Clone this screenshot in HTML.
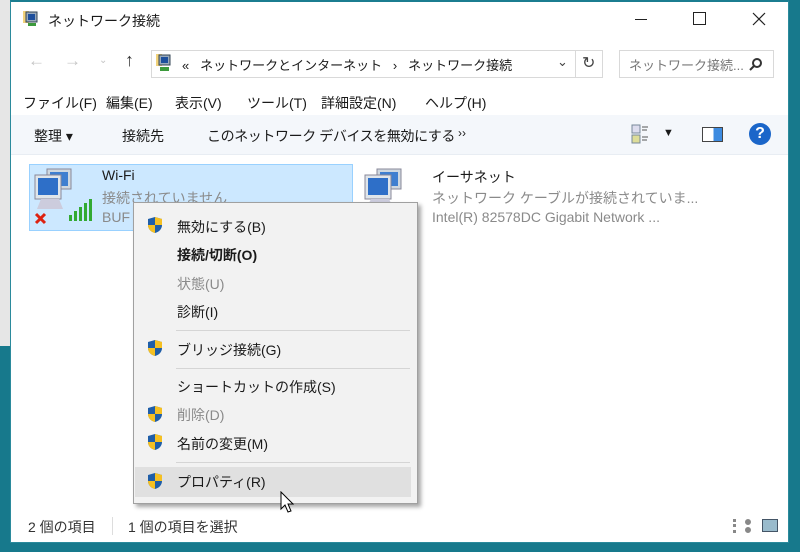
<!DOCTYPE html>
<html><head><meta charset="utf-8"><style>
*{margin:0;padding:0;box-sizing:border-box}
body{width:800px;height:552px;position:relative;overflow:hidden;background:#17798c;font-family:"Liberation Sans","Noto Sans CJK JP",sans-serif;font-size:14px;color:#1a1a1a}
.a{position:absolute;white-space:nowrap}
.g{color:#8a8a8a}
.sh{position:absolute;width:16px;height:18px}
</style></head><body>
<div class="a" style="left:0;top:0;width:10px;height:346px;background:#e6e6e6"></div>
<div class="a" style="left:10px;top:0;width:779px;height:543px;background:#fff;border:1px solid #2b8a9c;border-top:2px solid #1b7d90"></div>
<!-- title -->
<svg class="a" style="left:22px;top:10px" width="18" height="18"><rect x="1" y="1" width="6" height="12" fill="#f1d27a"/><rect x="4" y="2" width="11" height="10" fill="#9ab" stroke="#345" stroke-width="1"/><rect x="6" y="4" width="7" height="6" fill="#1d4f9c"/><rect x="6" y="13" width="8" height="3" fill="#3c9a3c"/></svg>
<div class="a" style="left:48px;top:11px;font-size:14px">ネットワーク接続</div>
<div class="a" style="left:635px;top:19px;width:12px;height:1px;background:#222"></div>
<div class="a" style="left:693px;top:12px;width:13px;height:13px;border:1px solid #222"></div>
<svg class="a" style="left:752px;top:12px" width="14" height="14"><path d="M1 1L13 13M13 1L1 13" stroke="#222" stroke-width="1.2"/></svg>
<!-- nav -->
<div class="a" style="left:28px;top:51px;color:#c5c5c5;font-size:17px">←</div>
<div class="a" style="left:64px;top:51px;color:#c5c5c5;font-size:17px">→</div>
<div class="a" style="left:99px;top:55px;color:#c5c5c5;font-size:10px">⌄</div>
<div class="a" style="left:125px;top:50px;font-size:18px;color:#333">↑</div>
<div class="a" style="left:151px;top:50px;width:452px;height:28px;border:1px solid #d9d9d9"></div>
<div class="a" style="left:575px;top:50px;width:1px;height:28px;background:#d9d9d9"></div>
<svg class="a" style="left:155px;top:53px" width="18" height="20"><rect x="1" y="1" width="6" height="12" fill="#f1d27a"/><rect x="4" y="2" width="11" height="10" fill="#9ab" stroke="#345"/><rect x="6" y="4" width="7" height="6" fill="#1d4f9c"/><rect x="5" y="14" width="9" height="4" fill="#3c9a3c"/></svg>
<div class="a" style="left:182px;top:55px;font-size:13px">«&nbsp;&nbsp; ネットワークとインターネット&nbsp;&nbsp; ›&nbsp;&nbsp; ネットワーク接続</div>
<div class="a" style="left:557px;top:54px;font-size:13px;color:#444">⌄</div>
<div class="a" style="left:582px;top:53px;font-size:16px;color:#444">↻</div>
<div class="a" style="left:619px;top:50px;width:155px;height:28px;border:1px solid #d9d9d9"></div>
<div class="a g" style="left:629px;top:55px;font-size:13px;color:#777">ネットワーク接続...</div>
<svg class="a" style="left:749px;top:57px" width="14" height="14"><circle cx="8" cy="6" r="4" fill="none" stroke="#333" stroke-width="2"/><line x1="5" y1="9" x2="1" y2="13" stroke="#333" stroke-width="2"/></svg>
<!-- menu -->
<div class="a" style="left:23px;top:93px">ファイル(F)</div>
<div class="a" style="left:106px;top:93px">編集(E)</div>
<div class="a" style="left:175px;top:93px">表示(V)</div>
<div class="a" style="left:247px;top:93px">ツール(T)</div>
<div class="a" style="left:321px;top:93px">詳細設定(N)</div>
<div class="a" style="left:425px;top:93px">ヘルプ(H)</div>
<!-- toolbar -->
<div class="a" style="left:11px;top:115px;width:777px;height:40px;background:#f4f7fb;border-bottom:1px solid #e8edf3"></div>
<div class="a" style="left:34px;top:126px">整理 ▾</div>
<div class="a" style="left:122px;top:126px">接続先</div>
<div class="a" style="left:207px;top:126px;letter-spacing:-0.4px">このネットワーク デバイスを無効にする</div>
<div class="a" style="left:458px;top:126px;font-size:12px">››</div>
<svg class="a" style="left:631px;top:124px" width="22" height="22"><rect x="1" y="1" width="8" height="8" fill="#dde" stroke="#789"/><rect x="1" y="11" width="8" height="8" fill="#dd9" stroke="#789"/><line x1="11" y1="3" x2="17" y2="3" stroke="#555"/><line x1="11" y1="6" x2="16" y2="6" stroke="#555"/><line x1="11" y1="13" x2="17" y2="13" stroke="#555"/><line x1="11" y1="16" x2="16" y2="16" stroke="#555"/></svg>
<div class="a" style="left:663px;top:127px;font-size:11px">▼</div>
<div class="a" style="left:702px;top:127px;width:21px;height:15px;border:1px solid #444;background:linear-gradient(90deg,#fff 55%,#3d8be0 55%)"></div>
<div class="a" style="left:749px;top:123px;width:22px;height:22px;border-radius:50%;background:#1b66c9;color:#fff;font-weight:bold;text-align:center;line-height:22px;font-size:16px">?</div>
<!-- wifi item -->
<div class="a" style="left:29px;top:164px;width:324px;height:67px;background:#cce8ff;border:1px solid #99d1ff"></div>
<svg class="a" style="left:33px;top:167px" width="64" height="62"><rect x="14" y="2" width="24" height="20" fill="#cfd8e0" stroke="#889"/><rect x="17" y="5" width="18" height="14" fill="#3f7fd0"/><rect x="2" y="8" width="26" height="24" fill="#dfe5ea" stroke="#889"/><rect x="5" y="11" width="20" height="17" fill="#2e6fc8"/><path d="M8 32 L26 32 L30 42 L4 42Z" fill="#ccd"/><path d="M3 47 L12 56 M12 47 L3 56" stroke="#d21" stroke-width="3"/><rect x="36" y="48" width="3" height="6" fill="#3a3"/><rect x="41" y="44" width="3" height="10" fill="#3a3"/><rect x="46" y="40" width="3" height="14" fill="#3a3"/><rect x="51" y="36" width="3" height="18" fill="#3a3"/><rect x="56" y="32" width="3" height="22" fill="#3a3"/></svg>
<div class="a" style="left:102px;top:167px">Wi-Fi</div>
<div class="a g" style="left:102px;top:188px">接続されていません</div>
<div class="a g" style="left:102px;top:209px">BUF</div>
<!-- ethernet -->
<svg class="a" style="left:363px;top:167px" width="50" height="50"><rect x="14" y="2" width="24" height="20" fill="#cfd8e0" stroke="#889"/><rect x="17" y="5" width="18" height="14" fill="#3f7fd0"/><rect x="2" y="8" width="26" height="24" fill="#dfe5ea" stroke="#889"/><rect x="5" y="11" width="20" height="17" fill="#2e6fc8"/><path d="M8 32 L26 32 L30 40 L4 40Z" fill="#ccd"/></svg>
<div class="a" style="left:432px;top:167px">イーサネット</div>
<div class="a g" style="left:432px;top:188px">ネットワーク ケーブルが接続されていま...</div>
<div class="a g" style="left:432px;top:209px">Intel(R) 82578DC Gigabit Network ...</div>
<!-- context menu -->
<div class="a" style="left:133px;top:202px;width:285px;height:302px;background:#f2f2f2;border:1px solid #a0a0a0;box-shadow:3px 3px 4px rgba(0,0,0,.35)"></div>
<div class="a" style="left:135px;top:467px;width:276px;height:30px;background:#e0e0e0"></div>
<div class="a" style="left:176px;top:330px;width:234px;height:1px;background:#d5d5d5"></div>
<div class="a" style="left:176px;top:368px;width:234px;height:1px;background:#d5d5d5"></div>
<div class="a" style="left:176px;top:462px;width:234px;height:1px;background:#d5d5d5"></div>
<svg width="0" height="0" style="position:absolute"><defs><g id="s"><path d="M8 1 L15 3 L15 9 C15 13 12 16 8 17 C4 16 1 13 1 9 L1 3Z" fill="#1f5ea8"/><path d="M8 1 L15 3 L15 9 L8 9Z M8 9 L1 9 C1 13 4 16 8 17Z" fill="#f5c022"/></g></defs></svg>
<svg class="sh" style="left:147px;top:216px"><use href="#s"/></svg>
<svg class="sh" style="left:147px;top:339px"><use href="#s"/></svg>
<svg class="sh" style="left:147px;top:405px"><use href="#s"/></svg>
<svg class="sh" style="left:147px;top:433px"><use href="#s"/></svg>
<svg class="sh" style="left:147px;top:472px"><use href="#s"/></svg>
<div class="a" style="left:177px;top:217px">無効にする(B)</div>
<div class="a" style="left:177px;top:245px;font-weight:bold">接続/切断(O)</div>
<div class="a g" style="left:177px;top:274px">状態(U)</div>
<div class="a" style="left:177px;top:302px">診断(I)</div>
<div class="a" style="left:177px;top:340px">ブリッジ接続(G)</div>
<div class="a" style="left:177px;top:377px">ショートカットの作成(S)</div>
<div class="a g" style="left:177px;top:405px">削除(D)</div>
<div class="a" style="left:177px;top:434px">名前の変更(M)</div>
<div class="a" style="left:177px;top:472px">プロパティ(R)</div>
<svg class="a" style="left:280px;top:491px" width="16" height="24"><path d="M1 1 L1 18 L5 14 L8 21 L11 20 L8 13 L13 13Z" fill="#fff" stroke="#000"/></svg>
<!-- status -->
<div class="a" style="left:28px;top:517px;color:#333">2 個の項目</div>
<div class="a" style="left:112px;top:517px;width:1px;height:18px;background:#ddd"></div>
<div class="a" style="left:128px;top:517px;color:#333">1 個の項目を選択</div>
<div class="a" style="left:733px;top:519px;width:18px;height:14px;border-left:3px dotted #888;border-right:6px dotted #888"></div>
<div class="a" style="left:762px;top:519px;width:16px;height:13px;border:1px solid #456;background:#9bc"></div>
</body></html>
